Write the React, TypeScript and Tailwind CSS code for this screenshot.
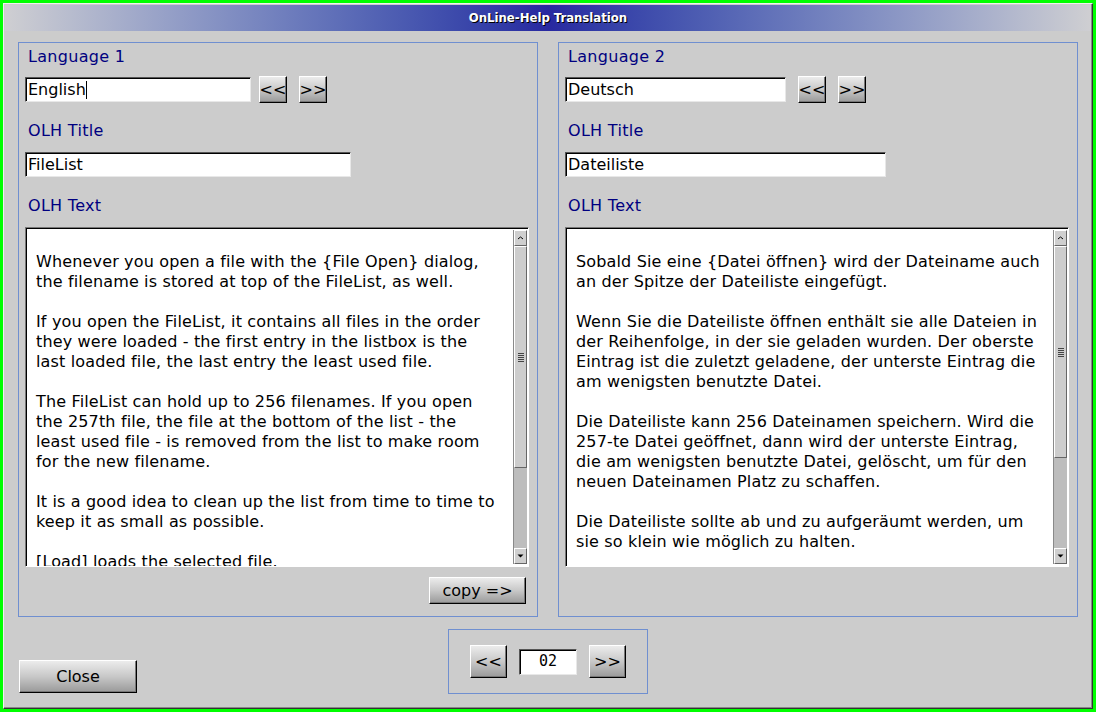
import React from "react";

const leftLines = [
  "",
  "Whenever you open a file with the {File Open} dialog,",
  "the filename is stored at top of the FileList, as well.",
  "",
  "If you open the FileList, it contains all files in the order",
  "they were loaded - the first entry in the listbox is the",
  "last loaded file, the last entry the least used file.",
  "",
  "The FileList can hold up to 256 filenames. If you open",
  "the 257th file, the file at the bottom of the list - the",
  "least used file - is removed from the list to make room",
  "for the new filename.",
  "",
  "It is a good idea to clean up the list from time to time to",
  "keep it as small as possible.",
  "",
  "[Load] loads the selected file.",
];

const rightLines = [
  "",
  "Sobald Sie eine {Datei öffnen} wird der Dateiname auch",
  "an der Spitze der Dateiliste eingefügt.",
  "",
  "Wenn Sie die Dateiliste öffnen enthält sie alle Dateien in",
  "der Reihenfolge, in der sie geladen wurden. Der oberste",
  "Eintrag ist die zuletzt geladene, der unterste Eintrag die",
  "am wenigsten benutzte Datei.",
  "",
  "Die Dateiliste kann 256 Dateinamen speichern. Wird die",
  "257-te Datei geöffnet, dann wird der unterste Eintrag,",
  "die am wenigsten benutzte Datei, gelöscht, um für den",
  "neuen Dateinamen Platz zu schaffen.",
  "",
  "Die Dateiliste sollte ab und zu aufgeräumt werden, um",
  "sie so klein wie möglich zu halten.",
];

const font = "font-['DejaVu_Sans',sans-serif]";

function Btn({ children, className }: { children: React.ReactNode; className: string }) {
  return (
    <div
      className={`flex items-center justify-center border border-t-white border-l-white border-r-black border-b-black bg-gradient-to-b from-[#ececec] via-[#c8c8c8] to-[#9a9a9a] shadow-[inset_-1px_-1px_0_#777] text-black ${font} ${className}`}
    >
      {children}
    </div>
  );
}

function Field({ value, className, caret }: { value: string; className: string; caret?: boolean }) {
  return (
    <div
      className={`flex items-center bg-white border border-t-[#555] border-l-[#555] border-r-[#e8e8e8] border-b-[#e8e8e8] shadow-[inset_1px_1px_0_#000] pl-[2px] text-[16px] text-black leading-none ${font} ${className}`}
    >
      <span>{value}</span>
      {caret && <span className="w-px h-[18px] bg-black" />}
    </div>
  );
}

function ScrollBar({ thumbH }: { thumbH: number }) {
  return (
    <div className="w-[14px] h-full flex flex-col bg-[#bdbdbd] border-l border-l-[#8a8a8a]">
      <div className="h-[16px] w-full flex items-center justify-center bg-[#cfcfcf] border border-t-white border-l-white border-r-[#666] border-b-[#666]">
        <svg width="7" height="4" viewBox="0 0 7 4">
          <path d="M1 3 L3.5 1 L6 3" stroke="#000" strokeWidth="1" fill="none" />
        </svg>
      </div>
      <div
        className="w-full flex items-center justify-center bg-[#cdcdcd] border border-t-white border-l-white border-r-[#666] border-b-[#666]"
        style={{ height: thumbH }}
      >
        <div className="flex flex-col gap-[1px]">
          <div className="w-[6px] h-px bg-[#444]" />
          <div className="w-[6px] h-px bg-[#444]" />
          <div className="w-[6px] h-px bg-[#444]" />
          <div className="w-[6px] h-px bg-[#444]" />
          <div className="w-[6px] h-px bg-[#444]" />
        </div>
      </div>
      <div className="flex-1" />
      <div className="h-[16px] w-full flex items-center justify-center bg-[#cfcfcf] border border-t-white border-l-white border-r-[#666] border-b-[#666]">
        <svg width="7" height="4" viewBox="0 0 7 4">
          <path d="M0.5 0.5 L6.5 0.5 L3.5 3.5 Z" fill="#000" />
        </svg>
      </div>
    </div>
  );
}

function TextBox({ lines, thumbH }: { lines: string[]; thumbH: number }) {
  return (
    <div className="w-[504px] h-[340px] flex bg-white border border-t-[#777] border-l-[#777] border-r-white border-b-white shadow-[inset_1px_1px_0_#000] overflow-hidden">
      <div className={`flex-1 pl-[10px] pt-[4px] pr-[2px] overflow-hidden text-[16px] tracking-[0.15px] leading-[20px] text-black ${font}`}>
        {lines.map((l, i) => (
          <div key={i} className="h-[20px] whitespace-pre">
            {l}
          </div>
        ))}
      </div>
      <div className="py-[2px] pr-[1px] h-full">
        <ScrollBar thumbH={thumbH} />
      </div>
    </div>
  );
}

function Panel({
  title,
  lang,
  olhTitle,
  lines,
  titleW,
  langW,
  firstGap,
  thumbH,
  caret,
  copy,
}: {
  title: string;
  lang: string;
  olhTitle: string;
  lines: string[];
  titleW: string;
  langW: string;
  firstGap: string;
  thumbH: number;
  caret?: boolean;
  copy?: boolean;
}) {
  const label = `text-[16px] leading-[20px] tracking-[0.3px] text-[#000080] ${font}`;
  return (
    <div className="w-[520px] h-[575px] border border-[#6f8fd0] flex flex-col pl-[6px] pt-[4px]">
      <div className={`${label} pl-[3px]`}>{title}</div>
      <div className="flex items-center mt-[9px] h-[27px]">
        <Field value={lang} className={`${langW} h-[25px]`} caret={caret} />
        <Btn className={`w-[28px] h-[27px] ${firstGap} text-[16px]`}>&lt;&lt;</Btn>
        <Btn className="w-[28px] h-[27px] ml-[12px] text-[16px]">&gt;&gt;</Btn>
      </div>
      <div className={`${label} pl-[3px] mt-[18px]`}>OLH Title</div>
      <Field value={olhTitle} className={`${titleW} h-[25px] mt-[11px]`} />
      <div className={`${label} pl-[3px] mt-[19px]`}>OLH Text</div>
      <div className="mt-[11px]">
        <TextBox lines={lines} thumbH={thumbH} />
      </div>
      {copy && (
        <div className="flex justify-end pr-[11px] mt-[10px]">
          <Btn className="w-[97px] h-[27px] text-[16px]">copy =&gt;</Btn>
        </div>
      )}
    </div>
  );
}

export default function App() {
  return (
    <div className="w-[1096px] h-[712px] bg-[#00ff00] p-[3px]">
      <div className="w-full h-full bg-[#cccccc] border border-t-[#f0f0f0] border-l-[#f0f0f0] border-r-[#333] border-b-[#333] shadow-[inset_-1px_-1px_0_#888] flex flex-col">
        <div className="h-[26px] mx-[1px] mt-[1px] bg-gradient-to-r from-[#cfcfd2] via-[#2828a0] to-[#cfcfd2] flex items-center justify-center">
          <span className="text-white font-bold text-[13px] [font-stretch:condensed] font-['DejaVu_Sans_Condensed','DejaVu_Sans',sans-serif] [text-shadow:1px_1px_0_#000]">
            OnLine-Help Translation
          </span>
        </div>
        <div className="flex gap-[20px] pl-[14px] mt-[11px]">
          <Panel
            title="Language 1"
            lang="English"
            olhTitle="FileList"
            lines={leftLines}
            langW="w-[226px]"
            titleW="w-[326px]"
            firstGap="ml-[8px]"
            thumbH={222}
            caret
            copy
          />
          <Panel
            title="Language 2"
            lang="Deutsch"
            olhTitle="Dateiliste"
            lines={rightLines}
            langW="w-[221px]"
            titleW="w-[321px]"
            firstGap="ml-[12px]"
            thumbH={212}
          />
        </div>
        <div className="flex items-start mt-[12px] pl-[15px]">
          <Btn className="w-[118px] h-[33px] mt-[31px] text-[16px]">Close</Btn>
          <div className="ml-[311px] w-[200px] h-[65px] border border-[#6f8fd0] flex items-center pl-[21px]">
            <Btn className="w-[37px] h-[33px] text-[16px]">&lt;&lt;</Btn>
            <div className="ml-[12px] w-[58px] h-[26px] bg-white border border-t-[#555] border-l-[#555] border-r-[#e8e8e8] border-b-[#e8e8e8] shadow-[inset_1px_1px_0_#000] flex items-center justify-center text-[15px] text-black font-['DejaVu_Sans_Mono',monospace]">
              02
            </div>
            <Btn className="w-[37px] h-[33px] ml-[12px] text-[16px]">&gt;&gt;</Btn>
          </div>
        </div>
      </div>
    </div>
  );
}
